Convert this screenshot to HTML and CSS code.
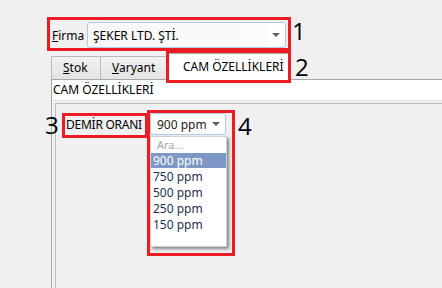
FILE: index.html
```html
<!DOCTYPE html>
<html lang="tr">
<head>
<meta charset="utf-8">
<title>Cam Özellikleri</title>
<link rel="stylesheet" href="styles.css">
</head>
<body>
<div class="screen">
  <div class="top">
    <span class="label"><u>F</u>irma</span>
    <div class="combo combo-firma">
      <span class="combo-text">ŞEKER LTD. ŞTİ.</span>
      <span class="arrow"></span>
    </div>
  </div>

  <div class="tabbar">
    <div class="tab"><u>S</u>tok</div>
    <div class="tab"><u>V</u>aryant</div>
    <div class="tab tab-active">CAM ÖZELLİKLERİ</div>
  </div>

  <div class="panel">
    <div class="band">CAM ÖZELLİKLERİ</div>
    <div class="inner">
      <div class="field">
        <span class="field-label">DEMİR ORANI</span>
        <div class="combo combo-small">
          <span class="combo-text">900 ppm</span>
          <span class="arrow"></span>
          <div class="dropdown">
            <div class="search">Ara...</div>
            <div class="item item-selected">900 ppm</div>
            <div class="item">750 ppm</div>
            <div class="item">500 ppm</div>
            <div class="item">250 ppm</div>
            <div class="item">150 ppm</div>
          </div>
        </div>
      </div>
    </div>
  </div>

  <div class="annot annot-1"></div>
  <div class="annot annot-2"></div>
  <div class="annot annot-3"></div>
  <div class="annot annot-4"></div>
  <span class="num num-1">1</span>
  <span class="num num-2">2</span>
  <span class="num num-3">3</span>
  <span class="num num-4">4</span>
</div>
</body>
</html>
```

FILE: styles.css
```css
html, body {
  margin: 0;
  padding: 0;
}
body {
  background: #f0f0f0;
  font-family: "Noto Sans", "DejaVu Sans", sans-serif;
  font-size: 12px;
  color: #000;
}
.screen {
  position: relative;
  width: 442px;
  height: 288px;
  overflow: hidden;
  display: flex;
  flex-direction: column;
}

/* top row */
.top {
  display: flex;
  align-items: center;
  padding: 22px 0 0 52px;
  height: 26px;
}
.label {
  width: 35px;
  flex: 0 0 35px;
}
.combo {
  position: relative;
  box-sizing: border-box;
  border: 1px solid #b3c9e8;
  border-radius: 3px;
  background: #fff;
  display: flex;
  align-items: center;
}
.combo-firma {
  width: 199px;
  height: 26px;
  padding-left: 5px;
  background: linear-gradient(to right, #f7f7f7 0, #fbfbfb 180px, #fff 181px);
}
.combo-text {
  flex: 1;
  white-space: nowrap;
}
.arrow {
  width: 0;
  height: 0;
  border-left: 4px solid transparent;
  border-right: 4px solid transparent;
  border-top: 4px solid #5f5f5f;
  margin-right: 5px;
}

/* tabs */
.tabbar {
  display: flex;
  align-items: flex-end;
  margin: 5px 0 0 51px;
  height: 26px;
  border-bottom: 1px solid #a7a7a7;
}
.tab {
  box-sizing: border-box;
  height: 23px;
  line-height: 21px;
  padding: 0 11px 0 11px;
  border: 1px solid #b9b9b9;
  border-bottom: none;
  border-radius: 2px 2px 0 0;
  background: linear-gradient(#f3f3f3, #e3e3e3);
  white-space: nowrap;
}
.tab + .tab {
  margin-left: -1px;
}
.tab:first-child {
  width: 50px;
}
.tab:nth-child(2) {
  width: 68px;
}
.tab-active {
  height: 27px;
  line-height: 26px;
  margin-bottom: -1px;
  margin-left: 0 !important;
  width: 121px;
  padding-left: 14px;
  background: #fff;
  border-color: #a7a7a7;
  position: relative;
}

/* panel */
.panel {
  flex: 1;
  margin-left: 51px;
  border-left: 1px solid #a7a7a7;
  display: flex;
  flex-direction: column;
}
.band {
  height: 20px;
  line-height: 20px;
  padding-left: 1px;
  background: #fff;
  border-bottom: 1px solid #e2e2e2;
  white-space: nowrap;
}
.inner {
  flex: 1;
  margin: 2px 0 0 3px;
  border-top: 1px solid #bcbcbc;
  border-left: 1px solid #bcbcbc;
  padding: 9px 0 0 10px;
}
.field {
  display: flex;
  align-items: center;
  height: 22px;
}
.field-label {
  flex: 0 0 84px;
  white-space: nowrap;
  letter-spacing: -0.25px;
}
.combo-small {
  width: 76px;
  height: 22px;
  padding-left: 6px;
  color: #222;
}
.combo-small .arrow {
  margin-right: 5px;
}

/* dropdown */
.dropdown {
  position: absolute;
  top: 22px;
  left: -1px;
  width: 77px;
  height: 111px;
  box-sizing: border-box;
  background: #fff;
  border: 1px solid #cfcfcf;
  box-shadow: 2px 2px 3px rgba(0, 0, 0, 0.45);
  z-index: 2;
}
.search {
  height: 16px;
  line-height: 15px;
  padding-left: 6px;
  color: #a6a6a6;
  font-size: 11px;
}
.item {
  height: 15px;
  line-height: 15px;
  margin-bottom: 1px;
  padding-left: 2px;
  color: #1e2f4d;
}
.item-selected {
  background: #7d98c6;
  color: #fff;
}

/* annotations */
.annot {
  position: absolute;
  box-sizing: border-box;
  border: 3px solid #ec1c24;
  z-index: 5;
}
.annot-1 { left: 47px; top: 17px; width: 244px; height: 34px; }
.annot-2 { left: 166px; top: 50px; width: 125px; height: 33px; }
.annot-3 { left: 62px; top: 113px; width: 86px; height: 25px; }
.annot-4 { left: 147px; top: 110px; width: 88px; height: 146px; }

.num {
  position: absolute;
  font-family: "Open Sans", "Liberation Sans", sans-serif;
  font-size: 24px;
  line-height: 24px;
  color: #000;
  z-index: 6;
}
.num-1 { left: 292px; top: 19px; }
.num-2 { left: 295px; top: 55px; }
.num-3 { left: 45px; top: 113px; }
.num-4 { left: 238px; top: 114px; }
```
